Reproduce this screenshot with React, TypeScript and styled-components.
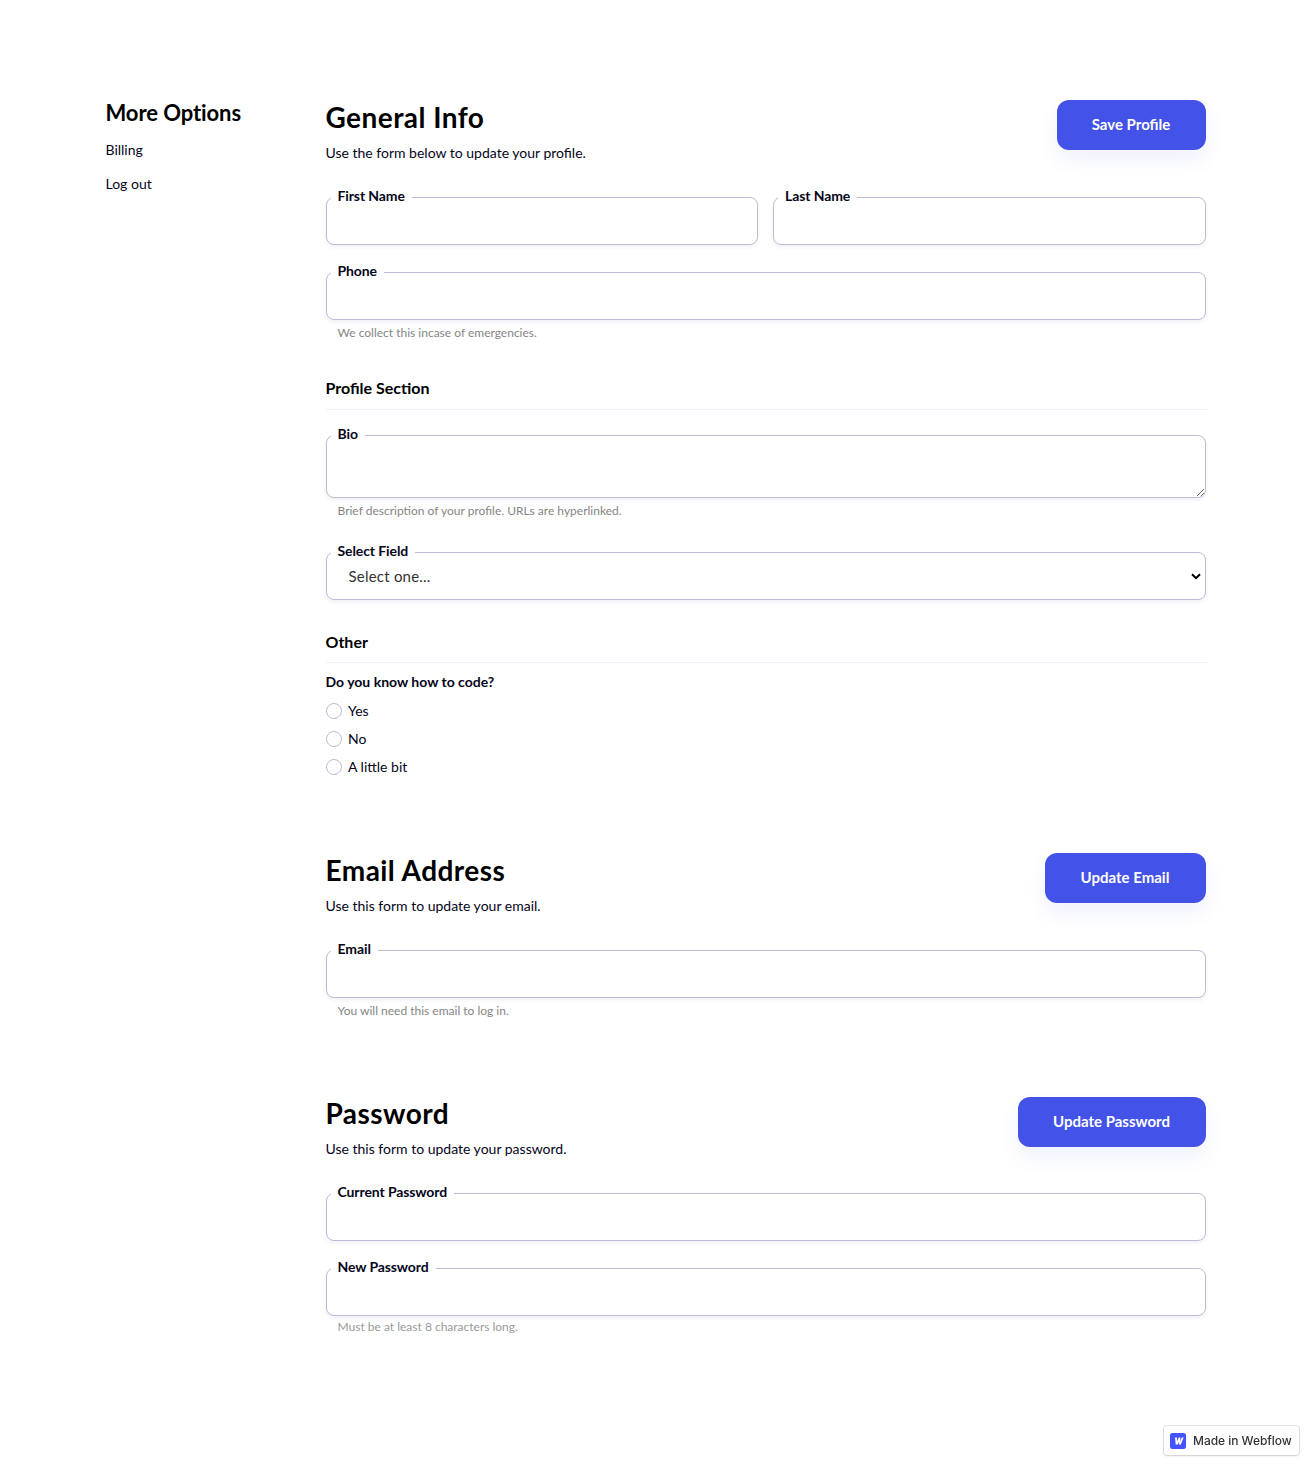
import React from "react";
import styled, { createGlobalStyle } from "styled-components";

const FONT = `"Lato", "Noto Sans", "Liberation Sans", sans-serif`;

const Global = createGlobalStyle`
  html, body { margin: 0; padding: 0; background: #fff; }
  body { font-family: ${FONT}; color: #05051a; font-size: 14px; line-height: 20px; }
  * { box-sizing: border-box; }
`;

const Page = styled.div`
  width: 1100px;
  height: 1467px;
  margin: 0 auto;
  padding-top: 100px;
  display: grid;
  grid-template-columns: 220px 880px;
  align-items: start;
`;

const Sidebar = styled.nav`
  display: flex;
  flex-direction: column;
`;

const SideTitle = styled.h3`
  margin: 0 0 14px;
  font-size: 22px;
  line-height: 26px;
  font-weight: 700;
  letter-spacing: -0.08px;
  color: #000;
`;

const SideLink = styled.a`
  font-size: 14px;
  line-height: 20px;
  margin-bottom: 14px;
  color: #05051a;
`;

const Main = styled.main`
  display: flex;
  flex-direction: column;
  gap: 76px;
`;

const Section = styled.section``;

const SectionHead = styled.header`
  display: flex;
  justify-content: space-between;
  align-items: flex-start;
  margin-bottom: 34px;
`;

const HeadText = styled.div<{ $lift?: boolean }>`
  margin-top: ${(p) => (p.$lift ? -1 : 0)}px;
`;

const Title = styled.h2`
  margin: 0 0 9px;
  font-size: 28px;
  line-height: 34px;
  font-weight: 700;
  letter-spacing: 0.45px;
  color: #000;
`;

const Sub = styled.p`
  margin: 0;
  font-size: 14px;
  line-height: 20px;
`;

const Primary = styled.button<{ $w: number }>`
  height: 50px;
  width: ${(p) => p.$w}px;
  padding: 0 0 3px;
  border: 0;
  border-radius: 12px;
  background: #4353e8;
  color: #fff;
  font-family: ${FONT};
  font-size: 15px;
  font-weight: 700;
  box-shadow: 0 10px 20px rgba(67, 83, 232, 0.08);
`;

const Row = styled.div`
  display: grid;
  grid-template-columns: 1fr 1fr;
  gap: 15px;
  margin-bottom: 27px;
`;

const Field = styled.div<{ $mb?: number; $mt?: number }>`
  position: relative;
  margin-top: ${(p) => p.$mt ?? 0}px;
  margin-bottom: ${(p) => p.$mb ?? 27}px;
`;

const Label = styled.label`
  position: absolute;
  top: -10px;
  left: 5px;
  z-index: 1;
  padding: 0 7px;
  background: #fff;
  font-size: 14px;
  line-height: 17px;
  font-weight: 700;
  letter-spacing: -0.1px;
  color: #05051a;
`;

const boxCss = `
  display: block;
  width: 100%;
  border: 1px solid #bcbcd6;
  border-radius: 8px;
  background: #fff;
  box-shadow: 0 2px 4px rgba(40, 40, 110, 0.07);
  outline: none;
`;

const Input = styled.input`
  ${boxCss}
  height: 48px;
`;

const TextArea = styled.textarea`
  ${boxCss}
  height: 63px;
  resize: vertical;
`;

const Select = styled.select`
  ${boxCss}
  appearance: none;
  height: 48px;
  padding: 0 22px;
  font-family: ${FONT};
  font-size: 15px;
  letter-spacing: 0.22px;
  color: #333;
`;

const Chevron = styled.svg`
  position: absolute;
  right: 5px;
  top: 21px;
  pointer-events: none;
`;

const Help = styled.p<{ $mt?: number; $c?: string }>`
  margin: ${(p) => p.$mt ?? 5}px 0 0;
  padding: 0 0 2px 12px;
  font-size: 12px;
  line-height: 16px;
  color: ${(p) => p.$c ?? "#858585"};
`;

const Group = styled.h4<{ $mt: number; $pb: number }>`
  margin: ${(p) => p.$mt}px 0 25px;
  padding-bottom: ${(p) => p.$pb}px;
  border-bottom: 1px solid #f0f0fb;
  font-size: 16px;
  line-height: 20px;
  font-weight: 700;
  color: #000;
`;

const Question = styled.div`
  margin: -16px 0 9px;
  font-size: 14px;
  line-height: 20px;
  font-weight: 700;
`;

const Radios = styled.div`
  display: flex;
  flex-direction: column;
  gap: 8px;
`;

const RadioRow = styled.label`
  display: flex;
  align-items: center;
  gap: 6.5px;
  font-size: 14px;
  line-height: 20px;
`;

const RadioDot = styled.input`
  appearance: none;
  width: 16px;
  height: 16px;
  margin: 0;
  border: 1px solid #bcbcd6;
  border-radius: 50%;
  background: #fff;
`;

const Badge = styled.a`
  position: fixed;
  right: 12px;
  bottom: 12px;
  width: 135px;
  height: 29px;
  display: flex;
  align-items: center;
  gap: 7px;
  padding-left: 6px;
  background: #fff;
  border-radius: 3px;
  box-shadow: 0 0 0 1px rgba(0, 0, 0, 0.1), 0 1px 3px rgba(0, 0, 0, 0.1);
  font-family: Inter, "Liberation Sans", sans-serif;
  font-size: 12px;
  letter-spacing: -0.04px;
  font-weight: 500;
  color: #333;
  white-space: nowrap;
`;

const LogoSvg = styled.svg`
  flex: none;
`;

const WebflowMark = () => (
  <LogoSvg width="16" height="16" viewBox="0 0 16 16">
    <rect width="16" height="16" rx="2.5" fill="#4353ff" />
    <path d="M13.6 4.6l-2.7 6.8H8.8l.5-3.6-1.5 3.6H5.7L5 4.6h2l.1 3.9 1.6-3.9h1.7l-.2 3.9 1.6-3.9z" fill="#fff" />
  </LogoSvg>
);

const TextField = ({ label, help, mb, helpMt, helpColor }: { label: string; help?: string; mb?: number; helpMt?: number; helpColor?: string }) => (
  <Field $mb={mb}>
    <Label>{label}</Label>
    <Input type="text" />
    {help && <Help $mt={helpMt} $c={helpColor}>{help}</Help>}
  </Field>
);

export default function App() {
  return (
    <>
      <Global />
      <Page>
        <Sidebar>
          <SideTitle>More Options</SideTitle>
          <SideLink>Billing</SideLink>
          <SideLink>Log out</SideLink>
        </Sidebar>
        <Main>
          <Section>
            <SectionHead>
              <HeadText>
                <Title>General Info</Title>
                <Sub>Use the form below to update your profile.</Sub>
              </HeadText>
              <Primary $w={149}>Save Profile</Primary>
            </SectionHead>
            <Row>
              <TextField label="First Name" mb={0} />
              <TextField label="Last Name" mb={0} />
            </Row>
            <TextField label="Phone" help="We collect this incase of emergencies." mb={0} />
            <Group $mt={35} $pb={11}>Profile Section</Group>
            <Field $mb={0}>
              <Label>Bio</Label>
              <TextArea />
              <Help>Brief description of your profile. URLs are hyperlinked.</Help>
            </Field>
            <Field $mt={31} $mb={32}>
              <Label>Select Field</Label>
              <Select defaultValue="">
                <option value="">Select one...</option>
              </Select>
              <Chevron width="10" height="7" viewBox="0 0 10 7">
                <path d="M1 1.2l4 4 4-4" fill="none" stroke="#000" strokeWidth="2" />
              </Chevron>
            </Field>
            <Group $mt={0} $pb={10}>Other</Group>
            <Question>Do you know how to code?</Question>
            <Radios>
              <RadioRow><RadioDot type="radio" name="code" />Yes</RadioRow>
              <RadioRow><RadioDot type="radio" name="code" />No</RadioRow>
              <RadioRow><RadioDot type="radio" name="code" />A little bit</RadioRow>
            </Radios>
          </Section>
          <Section>
            <SectionHead>
              <HeadText>
                <Title>Email Address</Title>
                <Sub>Use this form to update your email.</Sub>
              </HeadText>
              <Primary $w={161}>Update Email</Primary>
            </SectionHead>
            <TextField label="Email" help="You will need this email to log in." mb={0} />
          </Section>
          <Section>
            <SectionHead>
              <HeadText $lift>
                <Title>Password</Title>
                <Sub>Use this form to update your password.</Sub>
              </HeadText>
              <Primary $w={188}>Update Password</Primary>
            </SectionHead>
            <TextField label="Current Password" />
            <TextField label="New Password" help="Must be at least 8 characters long." mb={0} helpMt={3} helpColor="#999" />
          </Section>
        </Main>
      </Page>
      <Badge>
        <WebflowMark />
        Made in Webflow
      </Badge>
    </>
  );
}
